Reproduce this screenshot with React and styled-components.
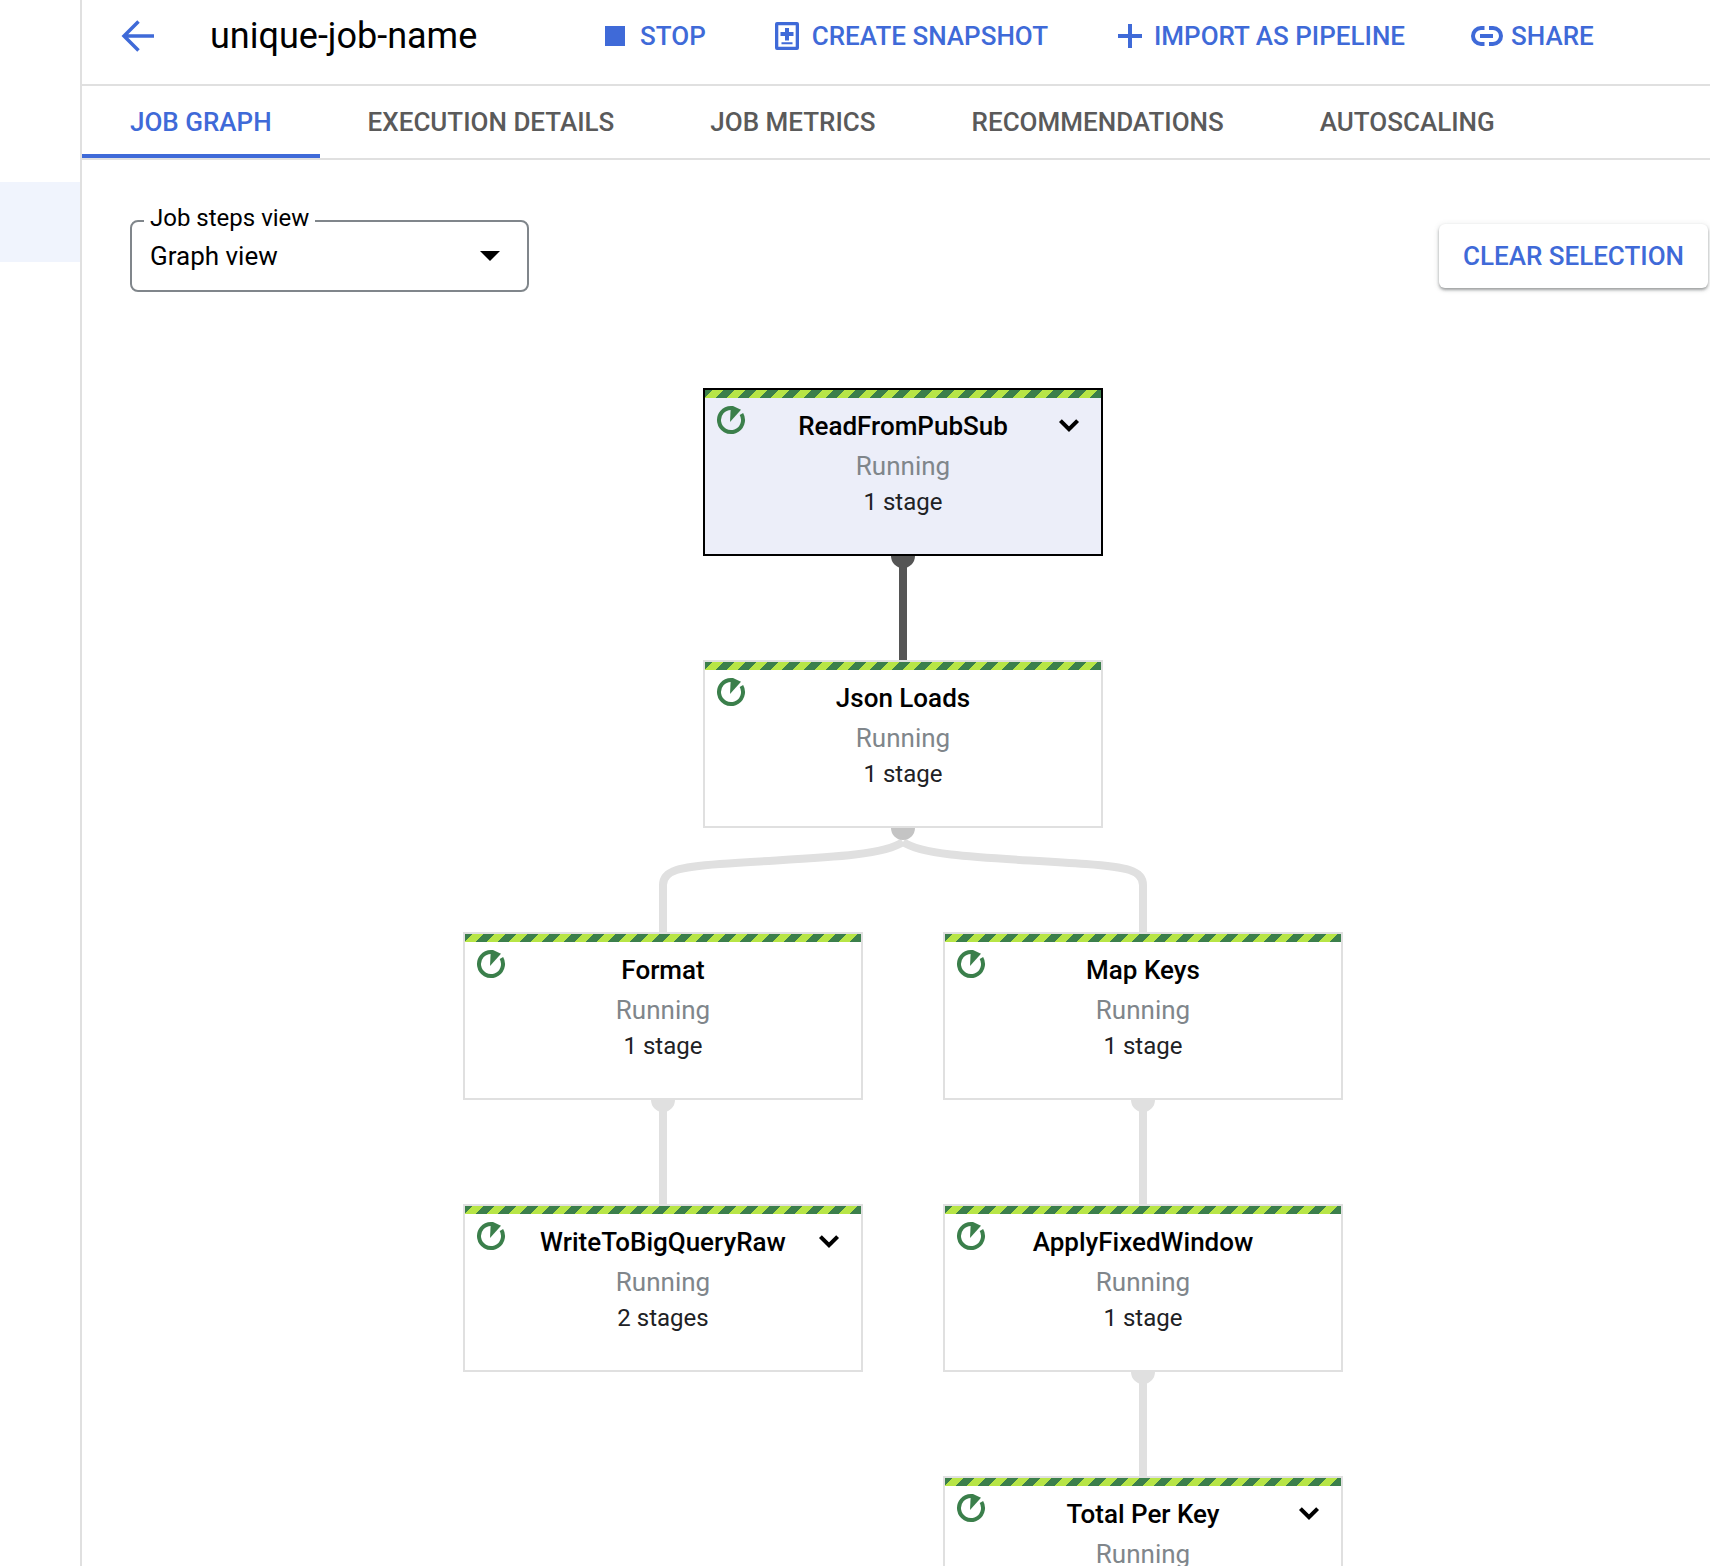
import React from "react";
import styled, { createGlobalStyle } from "styled-components";

const Global = createGlobalStyle`
  html, body { margin: 0; padding: 0; background: #fff; }
  body { font-family: Roboto, "Liberation Sans", sans-serif; }
`;
const Page = styled.div`
  width: 1710px; height: 1566px; overflow: hidden; display: flex; background: #fff;
`;
const Rail = styled.aside`
  width: 80px; flex: none; padding-top: 182px;
`;
const RailHighlight = styled.div`
  height: 80px; background: #f0f4fd;
`;
const Main = styled.main`
  flex: 1; min-width: 0; border-left: 2px solid #e0e0e0; display: flex; flex-direction: column;
`;
const TopBar = styled.header`
  height: 86px; flex: none; box-sizing: border-box; border-bottom: 2px solid #e0e0e0;
  display: flex; align-items: center; padding-left: 39px; padding-bottom: 12px;
`;
const BackIcon = styled.svg`
  width: 33px; height: 32px; flex: none; color: #3f6ad8;
`;
const Title = styled.h1`
  margin: 0 0 0 56px; width: 395px; flex: none; font-size: 36px; line-height: 44px; font-weight: 400; color: #000;
`;
const Action = styled.button`
  display: flex; align-items: center; gap: ${p => p.$gap}px; margin-right: ${p => p.$mr}px; padding: 0; border: 0; background: none;
  font: 500 26px/32px Roboto, sans-serif; color: #3f6ad8; white-space: nowrap;
`;
const Tabs = styled.nav`
  height: 74px; flex: none; box-sizing: border-box; border-bottom: 2px solid #e0e0e0; display: flex;
`;
const Tab = styled.div`
  height: 72px; box-sizing: border-box; padding: 4px 48px 0; display: flex; align-items: center;
  font-size: 26px; font-weight: 500; white-space: nowrap;
  color: ${p => (p.$active ? "#3f6ad8" : "#5a5a5a")};
  border-bottom: ${p => (p.$active ? "4px solid #3f6ad8" : "4px solid transparent")};
`;
const Toolbar = styled.div`
  flex: none; box-sizing: border-box; height: 132px; display: flex; justify-content: space-between; align-items: flex-start; padding: 60px 0 0 48px;
`;
const SelectBox = styled.div`
  position: relative; width: 399px; height: 72px; box-sizing: border-box; border: 2px solid #80868b; border-radius: 8px;
  display: flex; align-items: center; justify-content: space-between; padding: 0 27px 0 18px;
  font-size: 26px; color: #000;
`;
const SelectLabel = styled.span`
  position: absolute; left: 12px; top: -18px; padding: 0 6px; background: #fff; font-size: 24px; line-height: 28px; font-weight: 400; color: #000;
`;
const Caret = styled.i`
  width: 0; height: 0; border-left: 10px solid transparent; border-right: 10px solid transparent; border-top: 10px solid #000;
`;
const Clear = styled.button`
  width: 269px; height: 64px; margin: 4px 2px 0 0; border: 0; border-radius: 6px; background: #fff;
  box-shadow: 0 2px 3px rgba(60,64,67,.45), 0 1px 6px rgba(60,64,67,.15);
  font: 500 26px/32px Roboto, sans-serif; color: #3f6ad8; white-space: nowrap; padding: 0;
`;
const Canvas = styled.div`
  position: relative; flex: 1;
`;
const Wires = styled.svg`
  position: absolute; left: -82px; top: -292px; width: 1710px; height: 1566px;
`;
const NodeBox = styled.div`
  position: absolute; width: 400px; height: 168px; box-sizing: border-box; text-align: center;
  border: 2px solid ${p => (p.$selected ? "#000" : "#e0e0e0")};
  background: ${p => (p.$selected ? "#eceef9" : "#fff")};
`;
const Stripe = styled.div`
  height: 8px;
  background: repeating-linear-gradient(-45deg, #3b7f4b 0 7.78px, #b7e546 7.78px 15.56px);
`;
const StatusIcon = styled.svg`
  position: absolute; left: 11px; top: 15px; width: 30px; height: 30px;
`;
const Chevron = styled.svg`
  position: absolute; right: 20px; top: 24px; width: 24px; height: 24px;
`;
const NodeTitle = styled.div`
  margin-top: 11px; font-size: 26px; line-height: 34px; font-weight: 500; color: #000;
`;
const NodeState = styled.div`
  margin-top: 6px; font-size: 26px; line-height: 34px; color: #80868b;
`;
const NodeStages = styled.div`
  font-size: 24px; line-height: 38px; color: #202124;
`;

const actions = [
  { label: "STOP", gap: 15, mr: 69, icon: <svg width="20" height="20" viewBox="0 0 20 20"><rect width="20" height="20" fill="currentColor" /></svg> },
  { label: "CREATE SNAPSHOT", gap: 13, mr: 70, icon: <svg width="24" height="28" viewBox="0 0 24 28"><path fill="currentColor" fillRule="evenodd" d="M2 0h20a2 2 0 0 1 2 2v24a2 2 0 0 1-2 2H2a2 2 0 0 1-2-2V2a2 2 0 0 1 2-2zm1.300 3.300v21.400h17.400V3.300zM10 6h4v4h4.500v4H14v4.500h-4V14H5.500v-4H10zM6.500 20.300h11v2h-11z" /></svg> },
  { label: "IMPORT AS PIPELINE", gap: 12, mr: 66, icon: <svg width="24" height="24" viewBox="0 0 24 24"><path fill="currentColor" d="M10 0h4v10h10v4H14v10h-4V14H0v-4h10z" /></svg> },
  { label: "SHARE", gap: 8, mr: 0, icon: <svg width="32" height="20" viewBox="0 0 32 20"><path fill="none" stroke="currentColor" strokeWidth="4" d="M13.500 2H10a8 8 0 0 0 0 16h3.500M18 2h4a8 8 0 0 1 0 16h-4" /><rect x="9" y="8" width="13" height="4" fill="currentColor" /></svg> },
];
const tabs = ["JOB GRAPH", "EXECUTION DETAILS", "JOB METRICS", "RECOMMENDATIONS", "AUTOSCALING"];
const nodes = [
  { t: "ReadFromPubSub", s: "1 stage", x: 703, y: 388, sel: true, exp: true },
  { t: "Json Loads", s: "1 stage", x: 703, y: 660 },
  { t: "Format", s: "1 stage", x: 463, y: 932 },
  { t: "Map Keys", s: "1 stage", x: 943, y: 932 },
  { t: "WriteToBigQueryRaw", s: "2 stages", x: 463, y: 1204, exp: true },
  { t: "ApplyFixedWindow", s: "1 stage", x: 943, y: 1204 },
  { t: "Total Per Key", s: "1 stage", x: 943, y: 1476, exp: true },
];

function Node({ n }) {
  return (
    <NodeBox $selected={n.sel} style={{ left: n.x - 82, top: n.y - 292 }}>
      <Stripe />
      <StatusIcon viewBox="0 0 30 30">
        <path fill="none" stroke="#3b7f4b" strokeWidth="4" d="M15 3A12 12 0 1 0 25.400 9" />
        <path fill="#3b7f4b" d="M14.800 1H17L25 4.800L14 17z" />
      </StatusIcon>
      {n.exp && (
        <Chevron viewBox="0 0 24 24"><path fill="none" stroke="#000" strokeWidth="4" d="M3.400 6.600 12 15.200 20.600 6.600" /></Chevron>
      )}
      <NodeTitle>{n.t}</NodeTitle>
      <NodeState>Running</NodeState>
      <NodeStages>{n.s}</NodeStages>
    </NodeBox>
  );
}

export default function App() {
  return (
    <Page>
      <Global />
      <Rail><RailHighlight /></Rail>
      <Main>
        <TopBar>
          <BackIcon viewBox="0 0 33 32"><path fill="none" stroke="currentColor" strokeWidth="3.500" d="M33 16H3.500M17.500 1.500 3 16l14.500 14.500" /></BackIcon>
          <Title>unique-job-name</Title>
          {actions.map(a => (
            <Action key={a.label} $gap={a.gap} $mr={a.mr}>{a.icon}{a.label}</Action>
          ))}
        </TopBar>
        <Tabs>
          {tabs.map((t, i) => <Tab key={t} $active={i === 0}>{t}</Tab>)}
        </Tabs>
        <Toolbar>
          <SelectBox>
            <SelectLabel>Job steps view</SelectLabel>
            Graph view
            <Caret />
          </SelectBox>
          <Clear>CLEAR SELECTION</Clear>
        </Toolbar>
        <Canvas>
          <Wires viewBox="0 0 1710 1566">
            <g fill="none" strokeWidth="8">
              <path stroke="#555" d="M903 556V660" />
              <path stroke="#e0e0e0" d="M903 842C880 858 800 858 720 864C680 867 663 870 663 885V932M903 842C926 858 1006 858 1086 864C1126 867 1143 870 1143 885V932M663 1100V1204M1143 1100V1204M1143 1372V1476" />
            </g>
            <path fill="#555" d="M891 556a12 12 0 0 0 24 0z" />
            <path fill="#c4c4c4" d="M891 828a12 12 0 0 0 24 0z" />
            <path fill="#e0e0e0" d="M651 1100a12 12 0 0 0 24 0zM1131 1100a12 12 0 0 0 24 0zM1131 1372a12 12 0 0 0 24 0z" />
          </Wires>
          {nodes.map(n => <Node key={n.t} n={n} />)}
        </Canvas>
      </Main>
    </Page>
  );
}
